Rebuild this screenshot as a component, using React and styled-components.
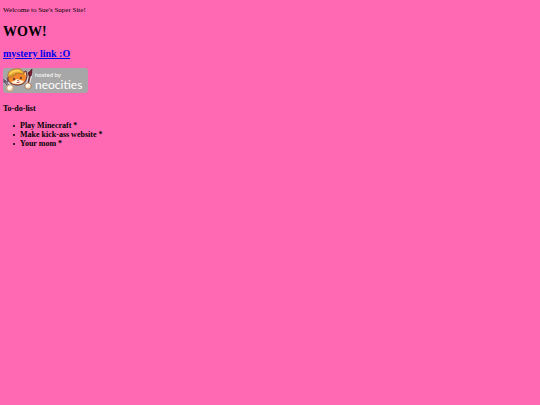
import React from "react";
import styled, { createGlobalStyle } from "styled-components";

const GlobalStyle = createGlobalStyle`
  body {
    margin: 0;
    background-color: #ff69b4;
    color: #000;
    font-family: "Liberation Serif", "Times New Roman", serif;
  }
`;

const Page = styled.main`
  display: flex;
  flex-direction: column;
  align-items: flex-start;
  padding: 6px 3px;
`;

const Welcome = styled.p`
  margin: 0;
  font-size: 7px;
  line-height: 9px;
`;

const Title = styled.h1`
  margin: 9px 0 0;
  font-size: 14px;
  line-height: 16px;
`;

const LinkHeading = styled.h2`
  margin: 8px 0 0;
  font-size: 10px;
  line-height: 12px;
`;

const MysteryLink = styled.a`
  color: #0000ee;
  text-decoration: underline;
`;

const BadgeLink = styled.a`
  display: flex;
  align-items: center;
  margin-top: 8px;
  width: 85px;
  height: 25px;
  border-radius: 3px;
  background-color: #a7a7a7;
  color: #fff;
  text-decoration: none;
`;

const Cat = styled.svg`
  flex: none;
  width: 32px;
  height: 25px;
`;

const BadgeText = styled.span`
  display: flex;
  flex-direction: column;
  font-family: Lato, sans-serif;
`;

const HostedBy = styled.span`
  font-size: 6px;
  line-height: 8px;
`;

const Brand = styled.span`
  font-size: 12px;
  line-height: 11px;
`;

const ListTitle = styled.h3`
  margin: 11px 0 0;
  font-size: 8px;
  line-height: 9px;
`;

const List = styled.ul`
  margin: 8px 0 0;
  padding-left: 10px;
  list-style: none;
  font-size: 8px;
  font-weight: bold;
  line-height: 9px;
`;

const ListItem = styled.li`
  display: flex;
  align-items: center;
  gap: 5px;

  &::before {
    content: "";
    width: 2px;
    height: 2px;
    border-radius: 50%;
    background-color: #000;
  }
`;

const todos = ["Play Minecraft *", "Make kick-ass website *", "Your mom *"];

const NeocitiesCat = () => (
  <Cat viewBox="0 0 32 25" aria-hidden="true">
    {/* wrench */}
    <path d="M2 13l4 5" stroke="#e4dade" strokeWidth="4" strokeLinecap="round" />
    <path d="M2 13l4 6" stroke="#65566b" strokeWidth="2.6" strokeLinecap="round" />
    <path d="M1 11v3l2 1 2-2-1-3" fill="none" stroke="#65566b" strokeWidth="1.4" />
    <path d="M3 14l2 3" stroke="#b7acb9" strokeWidth=".8" />
    {/* brush */}
    <path d="M25 16l3-12" stroke="#e4dade" strokeWidth="4" strokeLinecap="round" />
    <path d="M25 16l2-9" stroke="#643333" strokeWidth="1.6" strokeLinecap="round" />
    <path d="M26 8l-1-3 4-4v4l-1 3z" fill="#7d1727" stroke="#43192a" strokeWidth=".7" />
    {/* head */}
    <path
      d="M5 10l1-3 8-3 5 1 4-2 1 5-1 4c-2 4-5 5-9 5-5 0-9-3-9-7z"
      fill="#f3872b"
      stroke="#6a3440"
      strokeWidth="1"
    />
    <path d="M21 6l2-2v4z" fill="#ffc58e" />
    <path d="M8 14l3-1 3-2 3 1 4 1c-2 3-4 3-7 3-3 0-5-1-6-2z" fill="#fff1dc" />
    {/* hard hat */}
    <path
      d="M5 9C4 5 7 2 12 1c5-1 8 1 9 5l-6-1-7 4z"
      fill="#f1b83c"
      stroke="#a86a2c"
      strokeWidth=".8"
    />
    <path d="M7 6c2-3 6-4 10-3" fill="none" stroke="#ffd964" strokeWidth="1.2" />
    <path d="M5 9l8-4 5 1" fill="none" stroke="#bd7925" strokeWidth=".8" />
    {/* face */}
    <ellipse cx="11" cy="11" rx=".8" ry="1.2" fill="#432927" />
    <ellipse cx="18" cy="10" rx=".8" ry="1.2" fill="#432927" />
    <path d="M14 12h2l-1 1z" fill="#432927" />
    <path d="M13 14q2 1 4-1l-1 2h-2z" fill="#b94237" />
    {/* paws */}
    <circle cx="7" cy="20" r="3.3" fill="#fff7e6" stroke="#c08c68" strokeWidth=".9" />
    <circle cx="25" cy="18" r="3.2" fill="#fff7e6" stroke="#a06c50" strokeWidth=".9" />
    <path d="M7 21v2M9 20v2" stroke="#d9a678" strokeWidth=".7" />
    <path d="M25 19v2M27 18v2" stroke="#d9a678" strokeWidth=".7" />
  </Cat>
);

const App = () => {
  return (
    <>
      <GlobalStyle />
      <Page>
        <Welcome>Welcome to Sue's Super Site!</Welcome>
        <Title>WOW!</Title>
        <LinkHeading>
          <MysteryLink href="#mystery">mystery link :O</MysteryLink>
        </LinkHeading>
        <BadgeLink href="#neocities">
          <NeocitiesCat />
          <BadgeText>
            <HostedBy>hosted by</HostedBy>
            <Brand>neocities</Brand>
          </BadgeText>
        </BadgeLink>
        <ListTitle>To-do-list</ListTitle>
        <List>
          {todos.map((todo) => (
            <ListItem key={todo}>{todo}</ListItem>
          ))}
        </List>
      </Page>
    </>
  );
};

export default App;
